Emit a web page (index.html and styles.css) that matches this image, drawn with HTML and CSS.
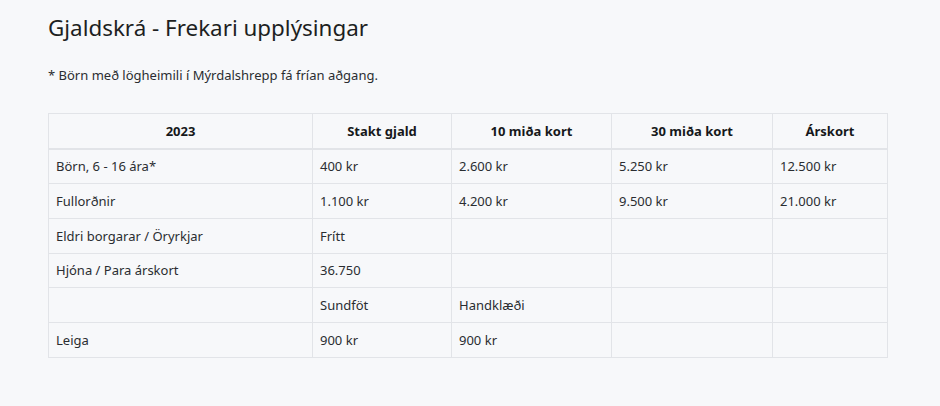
FILE: index.html
```html
<!DOCTYPE html>
<html lang="is">
<head>
<meta charset="utf-8">
<title>Gjaldskrá</title>
<link rel="stylesheet" href="styles.css">
</head>
<body>
<main class="page">
  <h1 class="title">Gjaldskrá - Frekari upplýsingar</h1>
  <p class="note">* Börn með lögheimili í Mýrdalshrepp fá frían aðgang.</p>
  <table class="prices">
    <colgroup>
      <col class="c1"><col class="c2"><col class="c3"><col class="c4"><col class="c5">
    </colgroup>
    <thead>
      <tr>
        <th>2023</th>
        <th>Stakt gjald</th>
        <th>10 miða kort</th>
        <th>30 miða kort</th>
        <th>Árskort</th>
      </tr>
    </thead>
    <tbody>
      <tr><td>Börn, 6 - 16 ára*</td><td>400 kr</td><td>2.600 kr</td><td>5.250 kr</td><td>12.500 kr</td></tr>
      <tr><td>Fullorðnir</td><td>1.100 kr</td><td>4.200 kr</td><td>9.500 kr</td><td>21.000 kr</td></tr>
      <tr><td>Eldri borgarar / Öryrkjar</td><td>Frítt</td><td></td><td></td><td></td></tr>
      <tr><td>Hjóna / Para árskort</td><td>36.750</td><td></td><td></td><td></td></tr>
      <tr><td></td><td>Sundföt</td><td>Handklæði</td><td></td><td></td></tr>
      <tr><td>Leiga</td><td>900 kr</td><td>900 kr</td><td></td><td></td></tr>
    </tbody>
  </table>
</main>
</body>
</html>
```
FILE: styles.css
```css
html, body {
  margin: 0;
  padding: 0;
  background: #f7f8fa;
}
body {
  font-family: "Noto Sans", "Open Sans", sans-serif;
  color: #212529;
}
.page {
  padding: 13px 48px 0 48px;
}
.title {
  margin: 0;
  font-size: 22.4px;
  font-weight: 400;
  line-height: 30px;
  color: #1d1f22;
}
.note {
  margin: 22px 0 0 0;
  font-size: 13px;
  line-height: 20px;
  color: #2a2d31;
}
.prices {
  margin-top: 28px;
  width: 839px;
  border-collapse: collapse;
  font-size: 13px;
  table-layout: fixed;
}
.prices th, .prices td {
  border: 1px solid #e2e4e8;
  height: 33.7px;
  padding: 0 7px;
  text-align: left;
  vertical-align: middle;
  line-height: 20px;
  color: #2a2d31;
}
.prices th {
  height: 33.5px;
  font-weight: 700;
  text-align: center;
  color: #16181b;
  border-bottom-width: 2px;
}
.c1 { width: 264px; }
.c2 { width: 139px; }
.c3 { width: 160px; }
.c4 { width: 161px; }
.c5 { width: 115px; }
```
